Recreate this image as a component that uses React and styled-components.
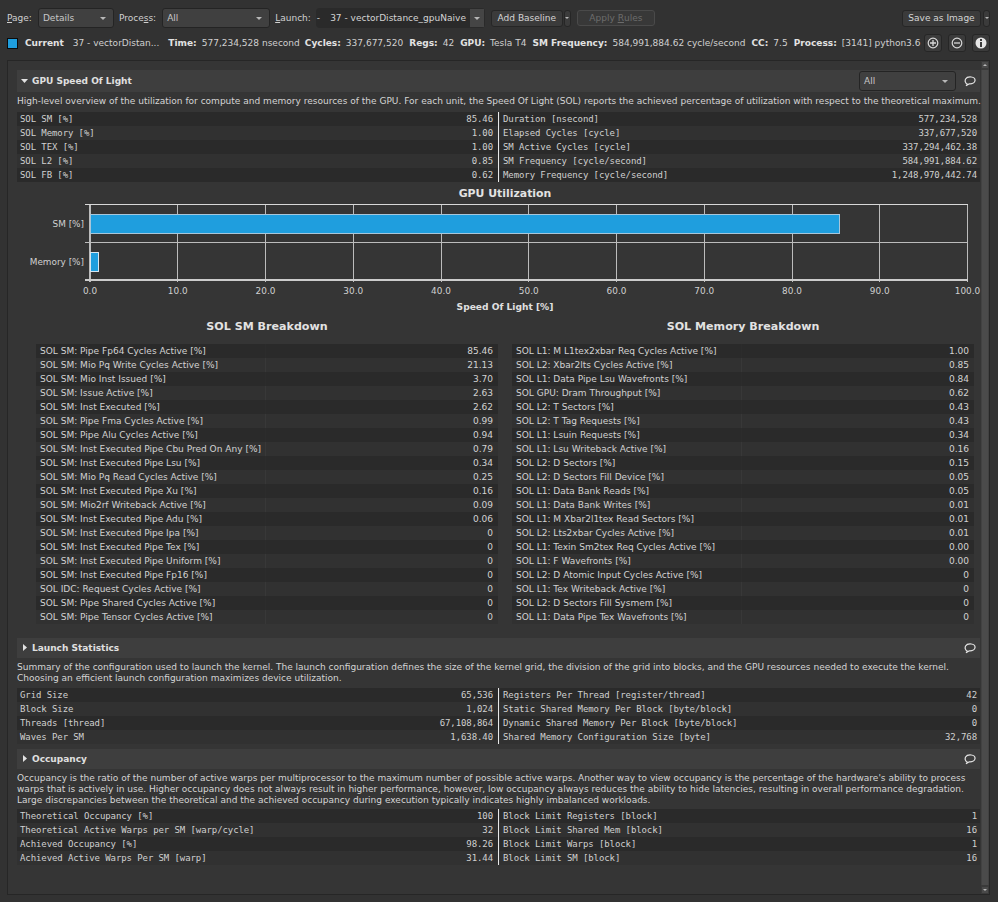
import React from 'react';
import styled, { createGlobalStyle } from 'styled-components';

const GlobalStyle = createGlobalStyle`
  html, body { margin: 0; padding: 0; background: #323232; }
  body { font-family: "DejaVu Sans", sans-serif; font-size: 9.02px; color: #d4d4d4; }
`;

const Page = styled.div`
  width: 998px;
  height: 902px;
  overflow: hidden;
  display: flex;
  flex-direction: column;
  background: #323232;
`;

const Toolbar = styled.div`
  display: flex;
  align-items: center;
  height: 20px;
  padding: 8px 8px 0 7px;
`;

const Label = styled.span`
  margin-right: ${({ $gap }) => $gap}px;
  color: #d0d0d0;
  u { text-underline-offset: 1px; }
`;

const Combo = styled.div`
  box-sizing: border-box;
  flex: none;
  width: ${({ $w }) => $w}px;
  height: ${({ $h }) => $h || 20}px;
  margin-right: ${({ $mr }) => $mr || 0}px;
  display: flex;
  align-items: center;
  justify-content: space-between;
  padding: 0 7px 0 4px;
  background: #404040;
  border: 1px solid #242424;
  border-radius: 3px;
  color: #c8c8c8;
`;

const LaunchCombo = styled.div`
  box-sizing: border-box;
  flex: none;
  width: 169px;
  height: 20px;
  margin-right: 6px;
  display: flex;
  background: #3c3c3c;
  border: 1px solid #2a2a2a;
  border-radius: 3px;
`;

const LaunchField = styled.div`
  flex: 1;
  background: #2a2a2a;
  line-height: 18px;
  display: flex;
  gap: 10px;
  white-space: nowrap;
  color: #d4d4d4;
`;

const LaunchArrow = styled.div`
  width: 14px;
  background: #454545;
  display: flex;
  align-items: center;
  justify-content: center;
`;

const Button = styled.div`
  box-sizing: border-box;
  flex: none;
  width: ${({ $w }) => $w}px;
  height: ${({ $h }) => $h || 17}px;
  margin-right: ${({ $mr }) => $mr || 0}px;
  display: flex;
  align-items: center;
  justify-content: center;
  background: ${({ $off }) => ($off ? '#383838' : '#3b3b3b')};
  border: 1px solid ${({ $off }) => ($off ? '#4a4a4a' : '#262626')};
  border-radius: 3px;
  color: ${({ $off }) => ($off ? '#6c6c6c' : '#d4d4d4')};
`;

const Spacer = styled.div`
  flex: 1;
`;

const Arrow = styled.i`
  display: block;
  width: 0;
  height: 0;
  border-left: ${({ $s }) => $s || 3}px solid transparent;
  border-right: ${({ $s }) => $s || 3}px solid transparent;
  border-${({ $up }) => ($up ? 'bottom' : 'top')}: ${({ $s }) => $s || 3}px solid #b8b8b8;
`;

const StatusBar = styled.div`
  display: flex;
  align-items: center;
  height: 18px;
  margin-top: 6px;
  padding: 0 8px 0 7px;
  white-space: nowrap;
  color: #d0d0d0;
`;

const Swatch = styled.div`
  box-sizing: border-box;
  flex: none;
  width: 11px;
  height: 11px;
  margin-right: 7px;
  background: #1f9ede;
  border: 1px solid #0c0c0c;
`;

const Stat = styled.span`
  margin-right: ${({ $mr }) => $mr}px;
  b { font-weight: 700; color: #e2e2e2; margin-right: 5px; }
`;

const IconButton = styled.div`
  box-sizing: border-box;
  flex: none;
  width: 18px;
  height: 18px;
  margin-left: ${({ $ml }) => $ml}px;
  display: flex;
  align-items: center;
  justify-content: center;
  background: #3b3b3b;
  border: 1px solid #262626;
  border-radius: 3px;
`;

const Panel = styled.div`
  box-sizing: border-box;
  width: 983px;
  height: 835px;
  margin: 8px 0 0 7px;
  display: flex;
  background: #353535;
  border: 1px solid #262626;
`;

const Content = styled.div`
  flex: 1;
  min-width: 0;
  padding: 9px 1px 0 9px;
`;

const ScrollTrack = styled.div`
  width: 8px;
  display: flex;
  flex-direction: column;
  background: #3a3a3a;
`;

const ScrollBtn = styled.div`
  height: 8px;
  display: flex;
  align-items: center;
  justify-content: center;
  background: #4a4a4a;
  border: 1px solid #3a3a3a;
  box-sizing: border-box;
`;

const ScrollThumb = styled.div`
  flex: 1;
  margin: 1px 0;
  background: #4b4b4b;
  border-left: 1px solid #424242;
  border-right: 1px solid #424242;
`;

const SectionHeader = styled.div`
  display: flex;
  align-items: center;
  height: ${({ $h }) => $h}px;
  margin-top: ${({ $mt }) => $mt || 0}px;
  padding: 0 4px 0 4px;
  background: #3e3e3e;
`;

const SectionTitle = styled.span`
  margin-left: 3px;
  font-weight: 700;
  font-size: 9px;
  color: #e0e0e0;
  flex: 1;
`;

const Desc = styled.p`
  margin: 0;
  padding-top: ${({ $pt }) => $pt}px;
  padding-bottom: ${({ $pb }) => $pb}px;
  line-height: 11px;
  white-space: pre;
  color: #d4d4d4;
`;

const TwoTables = styled.div`
  display: grid;
  grid-template-columns: 482px 1fr;
  column-gap: 1px;
`;

const Table = styled.div`
  ${({ $divider }) => $divider && 'border-right: 1px solid #e8e8e8;'}
`;

const Row = styled.div`
  display: flex;
  justify-content: space-between;
  height: 14px;
  line-height: 14px;
  padding: 0 ${({ $pr }) => $pr}px 0 3px;
  background: ${({ $odd }) => ($odd ? '#313131' : '#2a2a2a')};
  font-family: "DejaVu Sans Mono", monospace;
  font-size: 9px;
  letter-spacing: -0.09px;
  color: #d0d0d0;
`;

const BreakdownGrid = styled.div`
  display: grid;
  grid-template-columns: 462px 462px;
  column-gap: 14px;
  padding-left: 19px;
`;

const BreakdownTitle = styled.div`
  height: 26px;
  line-height: 18px;
  text-align: center;
  font-weight: 700;
  font-size: 11.1px;
  color: #e2e2e2;
`;

const BreakdownTable = styled.div`
  background: #2f2f2f;
`;

const BreakdownRow = styled.div`
  display: grid;
  grid-template-columns: 229px 1fr;
  height: 14px;
  line-height: 14px;
  background: ${({ $odd }) => ($odd ? '#313131' : '#2a2a2a')};
  color: #d2d2d2;
`;

const BreakdownName = styled.div`
  padding-left: 4px;
  white-space: nowrap;
`;

const BreakdownValue = styled.div`
  padding-right: 5px;
  text-align: right;
  border-left: 1px solid ${({ $odd }) => ($odd ? '#383838' : '#2c2c2c')};
`;

const ChartWrap = styled.div`
  height: 136px;
`;

const ChartSvg = styled.svg`
  display: block;
  font-family: "DejaVu Sans", sans-serif;
`;

const CollapseIcon = ({ open }) => (
  <svg width="8" height="8" viewBox="0 0 8 8">
    <path d={open ? 'M0 2 H7 L3.5 6 Z' : 'M2 0 V7 L6 3.5 Z'} fill="#e2e2e2" />
  </svg>
);

const Bubble = () => (
  <svg width="12" height="11" viewBox="0 0 12 11">
    <path d="M3.6 8.2 C1 7.4 .8 4.4 1.6 3 C2.6 1.2 5 .8 7.2 1 C9.8 1.3 11.2 2.8 11 4.6 C10.8 6.6 8.4 8 5.4 7.8 L2 9.6 Z" fill="none" stroke="#e4e4e4" strokeWidth="1.2" />
  </svg>
);

const Circle = ({ kind }) => (
  <svg width="14" height="14" viewBox="0 0 14 14">
    {kind === 'info' ? (
      <>
        <circle cx="7" cy="7" r="5.5" fill="#e6e6e6" />
        <rect x="6" y="6" width="2" height="5" fill="#3b3b3b" />
        <rect x="6" y="3" width="2" height="2" fill="#3b3b3b" />
      </>
    ) : (
      <>
        <circle cx="7" cy="7" r="4.8" fill="none" stroke="#d8d8d8" strokeWidth="1.2" />
        <path d={kind === 'plus' ? 'M4 7 H10 M7 4 V10' : 'M4 7 H10'} stroke="#d8d8d8" strokeWidth="1.3" />
      </>
    )}
  </svg>
);

const GRID = '#bcbcbc';
const X0 = 73;
const UNIT = 8.775;

const Chart = () => {
  const ticks = [0, 10, 20, 30, 40, 50, 60, 70, 80, 90, 100];
  return (
    <ChartWrap>
      <ChartSvg width="964" height="136" viewBox="0 0 964 136">
        <text x="488" y="15" textAnchor="middle" fontSize="10.9" fontWeight="700" fill="#e2e2e2">GPU Utilization</text>
        <g shapeRendering="crispEdges" stroke={GRID}>
          {ticks.map((t) => (
            <line key={t} x1={X0 + t * UNIT} x2={X0 + t * UNIT} y1="22" y2="100" strokeWidth={t === 0 ? 2 : 1} />
          ))}
          <line x1="68" x2={X0 + 100 * UNIT} y1="22.5" y2="22.5" stroke="#d8d8d8" />
          <line x1="68" x2={X0 + 100 * UNIT} y1="60.5" y2="60.5" />
          <line x1="68" x2={X0 + 100 * UNIT} y1="98" y2="98" stroke="#cccccc" strokeWidth="2" />
          <rect x={X0} y="32.5" width={85.46 * UNIT} height="19" fill="#1f9ede" stroke="#a8c6da" />
          <rect x={X0} y="70.5" width={1 * UNIT} height="19" fill="#1f9ede" stroke="#d8e6f0" />
        </g>
        <g fontSize="8.9" fill="#d0d0d0">
          <text x="67" y="45" textAnchor="end">SM [%]</text>
          <text x="67" y="83" textAnchor="end">Memory [%]</text>
          {ticks.map((t) => (
            <text key={t} x={X0 + t * UNIT} y="112" textAnchor="middle">{t}.0</text>
          ))}
        </g>
        <text x="488" y="128" textAnchor="middle" fontSize="9.1" fontWeight="700" fill="#e0e0e0">Speed Of Light [%]</text>
      </ChartSvg>
    </ChartWrap>
  );
};

const StatTables = ({ left, right }) => (
  <TwoTables>
    <Table $divider>
      {left.map(([k, v], i) => (
        <Row key={k} $odd={i % 2 === 1} $pr={5}><span>{k}</span><span>{v}</span></Row>
      ))}
    </Table>
    <Table>
      {right.map(([k, v], i) => (
        <Row key={k} $odd={i % 2 === 1} $pr={3}><span>{k}</span><span>{v}</span></Row>
      ))}
    </Table>
  </TwoTables>
);

const Breakdown = ({ rows }) => (
  <BreakdownTable>
    {rows.map(([k, v], i) => (
      <BreakdownRow key={k} $odd={i % 2 === 1}>
        <BreakdownName>{k}</BreakdownName>
        <BreakdownValue $odd={i % 2 === 1}>{v}</BreakdownValue>
      </BreakdownRow>
    ))}
  </BreakdownTable>
);

const solLeft = [['SOL SM [%]', '85.46'], ['SOL Memory [%]', '1.00'], ['SOL TEX [%]', '1.00'], ['SOL L2 [%]', '0.85'], ['SOL FB [%]', '0.62']];
const solRight = [['Duration [nsecond]', '577,234,528'], ['Elapsed Cycles [cycle]', '337,677,520'], ['SM Active Cycles [cycle]', '337,294,462.38'], ['SM Frequency [cycle/second]', '584,991,884.62'], ['Memory Frequency [cycle/second]', '1,248,970,442.74']];

const smRows = [
  ['SOL SM: Pipe Fp64 Cycles Active [%]', '85.46'],
  ['SOL SM: Mio Pq Write Cycles Active [%]', '21.13'],
  ['SOL SM: Mio Inst Issued [%]', '3.70'],
  ['SOL SM: Issue Active [%]', '2.63'],
  ['SOL SM: Inst Executed [%]', '2.62'],
  ['SOL SM: Pipe Fma Cycles Active [%]', '0.99'],
  ['SOL SM: Pipe Alu Cycles Active [%]', '0.94'],
  ['SOL SM: Inst Executed Pipe Cbu Pred On Any [%]', '0.79'],
  ['SOL SM: Inst Executed Pipe Lsu [%]', '0.34'],
  ['SOL SM: Mio Pq Read Cycles Active [%]', '0.25'],
  ['SOL SM: Inst Executed Pipe Xu [%]', '0.16'],
  ['SOL SM: Mio2rf Writeback Active [%]', '0.09'],
  ['SOL SM: Inst Executed Pipe Adu [%]', '0.06'],
  ['SOL SM: Inst Executed Pipe Ipa [%]', '0'],
  ['SOL SM: Inst Executed Pipe Tex [%]', '0'],
  ['SOL SM: Inst Executed Pipe Uniform [%]', '0'],
  ['SOL SM: Inst Executed Pipe Fp16 [%]', '0'],
  ['SOL IDC: Request Cycles Active [%]', '0'],
  ['SOL SM: Pipe Shared Cycles Active [%]', '0'],
  ['SOL SM: Pipe Tensor Cycles Active [%]', '0'],
];

const memRows = [
  ['SOL L1: M L1tex2xbar Req Cycles Active [%]', '1.00'],
  ['SOL L2: Xbar2lts Cycles Active [%]', '0.85'],
  ['SOL L1: Data Pipe Lsu Wavefronts [%]', '0.84'],
  ['SOL GPU: Dram Throughput [%]', '0.62'],
  ['SOL L2: T Sectors [%]', '0.43'],
  ['SOL L2: T Tag Requests [%]', '0.43'],
  ['SOL L1: Lsuin Requests [%]', '0.34'],
  ['SOL L1: Lsu Writeback Active [%]', '0.16'],
  ['SOL L2: D Sectors [%]', '0.15'],
  ['SOL L2: D Sectors Fill Device [%]', '0.05'],
  ['SOL L1: Data Bank Reads [%]', '0.05'],
  ['SOL L1: Data Bank Writes [%]', '0.01'],
  ['SOL L1: M Xbar2l1tex Read Sectors [%]', '0.01'],
  ['SOL L2: Lts2xbar Cycles Active [%]', '0.01'],
  ['SOL L1: Texin Sm2tex Req Cycles Active [%]', '0.00'],
  ['SOL L1: F Wavefronts [%]', '0.00'],
  ['SOL L2: D Atomic Input Cycles Active [%]', '0'],
  ['SOL L1: Tex Writeback Active [%]', '0'],
  ['SOL L2: D Sectors Fill Sysmem [%]', '0'],
  ['SOL L1: Data Pipe Tex Wavefronts [%]', '0'],
];

const launchLeft = [['Grid Size', '65,536'], ['Block Size', '1,024'], ['Threads [thread]', '67,108,864'], ['Waves Per SM', '1,638.40']];
const launchRight = [['Registers Per Thread [register/thread]', '42'], ['Static Shared Memory Per Block [byte/block]', '0'], ['Dynamic Shared Memory Per Block [byte/block]', '0'], ['Shared Memory Configuration Size [byte]', '32,768']];
const occLeft = [['Theoretical Occupancy [%]', '100'], ['Theoretical Active Warps per SM [warp/cycle]', '32'], ['Achieved Occupancy [%]', '98.26'], ['Achieved Active Warps Per SM [warp]', '31.44']];
const occRight = [['Block Limit Registers [block]', '1'], ['Block Limit Shared Mem [block]', '16'], ['Block Limit Warps [block]', '1'], ['Block Limit SM [block]', '16']];

export default function App() {
  return (
    <>
      <GlobalStyle />
      <Page>
        <Toolbar>
          <Label $gap={6}><u>P</u>age:</Label>
          <Combo $w={76} $mr={5}>Details<Arrow /></Combo>
          <Label $gap={6}>Proce<u>s</u>s:</Label>
          <Combo $w={108} $mr={5}>All<Arrow /></Combo>
          <Label $gap={5}><u>L</u>aunch:</Label>
          <LaunchCombo>
            <LaunchField><span>-</span><span>37 - vectorDistance_gpuNaive</span></LaunchField>
            <LaunchArrow><Arrow /></LaunchArrow>
          </LaunchCombo>
          <Button $w={72} $mr={1}>Add Baseline</Button>
          <Button $w={7} $mr={6}><Arrow $s={2} /></Button>
          <Button $w={78} $h={16} $off>Apply&nbsp;<u>R</u>ules</Button>
          <Spacer />
          <Button $w={79} $mr={2}>Save as Image</Button>
          <Button $w={7}><Arrow $s={2} /></Button>
        </Toolbar>

        <StatusBar>
          <Swatch />
          <Stat $mr={4}><b>Current</b></Stat>
          <Stat $mr={9}>37 - vectorDistan...</Stat>
          <Stat $mr={5}><b>Time:</b>577,234,528 nsecond</Stat>
          <Stat $mr={6}><b>Cycles:</b>337,677,520</Stat>
          <Stat $mr={6}><b>Regs:</b>42</Stat>
          <Stat $mr={6}><b>GPU:</b>Tesla T4</Stat>
          <Stat $mr={6}><b>SM Frequency:</b>584,991,884.62 cycle/second</Stat>
          <Stat $mr={6}><b>CC:</b>7.5</Stat>
          <Stat $mr={0}><b>Process:</b>[3141] python3.6</Stat>
          <Spacer />
          <IconButton $ml={0}><Circle kind="plus" /></IconButton>
          <IconButton $ml={6}><Circle kind="minus" /></IconButton>
          <IconButton $ml={6}><Circle kind="info" /></IconButton>
        </StatusBar>

        <Panel>
          <Content>
            <SectionHeader $h={22}>
              <CollapseIcon open />
              <SectionTitle>GPU Speed Of Light</SectionTitle>
              <Combo $w={97} $mr={8}>All<Arrow /></Combo>
              <Bubble />
            </SectionHeader>
            <Desc $pt={4} $pb={5}>High-level overview of the utilization for compute and memory resources of the GPU. For each unit, the Speed Of Light (SOL) reports the achieved percentage of utilization with respect to the theoretical maximum.</Desc>
            <StatTables left={solLeft} right={solRight} />
            <Chart />
            <BreakdownGrid>
              <div>
                <BreakdownTitle>SOL SM Breakdown</BreakdownTitle>
                <Breakdown rows={smRows} />
              </div>
              <div>
                <BreakdownTitle>SOL Memory Breakdown</BreakdownTitle>
                <Breakdown rows={memRows} />
              </div>
            </BreakdownGrid>

            <SectionHeader $h={20} $mt={14}>
              <CollapseIcon />
              <SectionTitle>Launch Statistics</SectionTitle>
              <Bubble />
            </SectionHeader>
            <Desc $pt={4} $pb={4}>{'Summary of the configuration used to launch the kernel. The launch configuration defines the size of the kernel grid, the division of the grid into blocks, and the GPU resources needed to execute the kernel.\nChoosing an efficient launch configuration maximizes device utilization.'}</Desc>
            <StatTables left={launchLeft} right={launchRight} />

            <SectionHeader $h={20} $mt={5}>
              <CollapseIcon />
              <SectionTitle>Occupancy</SectionTitle>
              <Bubble />
            </SectionHeader>
            <Desc $pt={4} $pb={3}>{"Occupancy is the ratio of the number of active warps per multiprocessor to the maximum number of possible active warps. Another way to view occupancy is the percentage of the hardware's ability to process\nwarps that is actively in use. Higher occupancy does not always result in higher performance, however, low occupancy always reduces the ability to hide latencies, resulting in overall performance degradation.\nLarge discrepancies between the theoretical and the achieved occupancy during execution typically indicates highly imbalanced workloads."}</Desc>
            <StatTables left={occLeft} right={occRight} />
          </Content>
          <ScrollTrack>
            <ScrollBtn><Arrow $s={2} $up /></ScrollBtn>
            <ScrollThumb />
            <ScrollBtn><Arrow $s={2} /></ScrollBtn>
          </ScrollTrack>
        </Panel>
      </Page>
    </>
  );
}
